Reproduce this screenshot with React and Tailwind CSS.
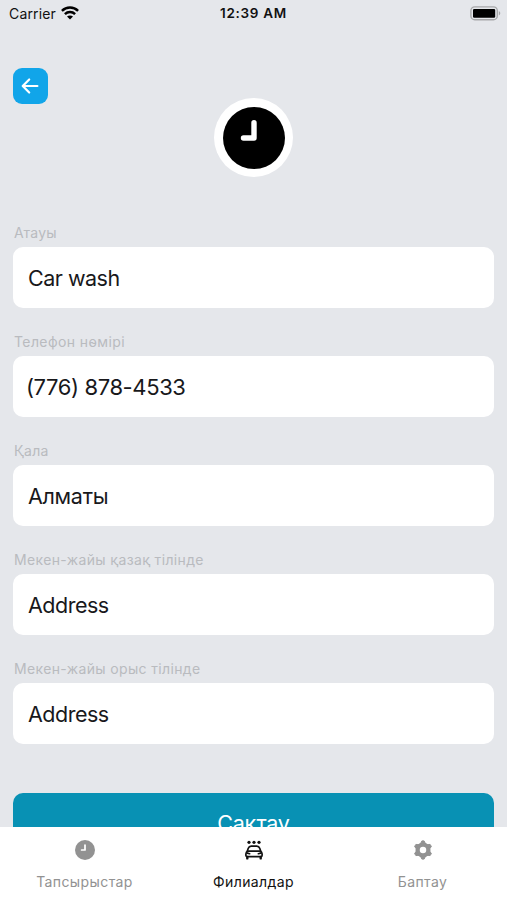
const fields = [
  { label: "Атауы", value: "Car wash", labelSize: "tracking-[0.2px]", valueSize: "pl-[15px] text-[21.5px] tracking-[-0.5px]" },
  { label: "Телефон нөмірі", value: "(776) 878-4533", labelSize: "tracking-[0.4px]", valueSize: "pl-[13px] text-[22px] tracking-[-0.4px]" },
  { label: "Қала", value: "Алматы", labelSize: "tracking-[0.2px]", valueSize: "pl-[15px] text-[21.5px] tracking-[-0.3px]" },
  { label: "Мекен-жайы қазақ тілінде", value: "Address", labelSize: "tracking-[0.35px]", valueSize: "pl-[15px] text-[21.5px] tracking-[-0.5px]" },
  { label: "Мекен-жайы орыс тілінде", value: "Address", labelSize: "tracking-[0.35px]", valueSize: "pl-[15px] text-[21.5px] tracking-[-0.5px]" },
]

const WifiIcon = () => (
  <svg className="w-[18px] h-[14px]" viewBox="0 0 18 14" fill="none" stroke="#000" strokeWidth="2.5">
    <path d="M0.9 4.9C5.5 0.5 12.5 0.5 17.1 4.9" />
    <path d="M3.9 8.1C6.8 5.3 11.2 5.3 14.1 8.1" />
    <path d="M9 13.6L6 10.6C7.7 9.1 10.3 9.1 12 10.6Z" fill="#000" stroke="none" />
  </svg>
)

const BatteryIcon = () => (
  <svg className="w-[31px] h-[15px]" viewBox="0 0 31 15" fill="none">
    <rect x="0.9" y="0.9" width="26.4" height="12.8" rx="3.8" stroke="#a7a8aa" strokeWidth="1.4" />
    <rect x="3" y="2.9" width="22.2" height="8.8" rx="1.2" fill="#000" />
    <path d="M28.8 5.1C30.8 5.9 30.8 8.7 28.8 9.5Z" fill="#a7a8aa" />
  </svg>
)

const ClockIcon = ({ className }) => (
  <svg className={className} viewBox="0 0 62 62">
    <circle cx="31" cy="31" r="31" fill="currentColor" />
    <path d="M31 15.8V31H20.5" fill="none" stroke="#fff" strokeWidth="5.4" strokeLinecap="round" strokeLinejoin="round" />
  </svg>
)

const CarWashIcon = () => (
  <svg className="w-5 h-5" viewBox="0 0 20 20" fill="none" stroke="currentColor" strokeWidth="1.7" strokeLinecap="round" strokeLinejoin="round">
    <path d="M3.2 11.2L4.3 8.2C4.8 6.8 5.8 6.1 7.2 6.1H12.8C14.2 6.1 15.2 6.8 15.7 8.2L16.8 11.2" />
    <path d="M3.9 11.1H16.1C17.4 11.6 18.1 12.6 18.1 14V15.2C18.1 16.1 17.6 16.6 16.7 16.6H3.3C2.4 16.6 1.9 16.1 1.9 15.2V14C1.9 12.6 2.6 11.6 3.9 11.1Z" />
    <path d="M3.3 17V18.4M16.7 17V18.4" strokeWidth="2.4" />
    <path d="M3.4 13.1L5.6 13.7M16.6 13.1L14.4 13.7" />
    <g fill="currentColor" stroke="none">
      <circle cx="5" cy="2.3" r="1.6" />
      <circle cx="10" cy="2.3" r="1.6" />
      <circle cx="15" cy="2.3" r="1.6" />
    </g>
  </svg>
)

const GearIcon = () => (
  <svg className="w-5 h-5" viewBox="0 0 20 20" fill="none" stroke="currentColor" strokeLinejoin="round">
    <circle cx="10" cy="10" r="5.4" strokeWidth="4.3" />
    <path d="M8.9 0.9H11.1L12.6 4H7.4ZM8.9 19.1H11.1L12.6 16H7.4ZM1.6 6.5L2.9 4.4L6.4 4.8L3.8 9.3ZM18.4 6.5L17.1 4.4L13.6 4.8L16.2 9.3ZM1.6 13.5L2.9 15.6L6.4 15.2L3.8 10.7ZM18.4 13.5L17.1 15.6L13.6 15.2L16.2 10.7Z" fill="currentColor" strokeWidth="1" />
  </svg>
)

const StatusBar = () => (
  <div className="grid grid-cols-3 items-center h-7 shrink-0 pl-[9px] pr-[6px] text-[14px] text-[#111]">
    <div className="flex items-center gap-[5px] -mt-[2px]">
      <span className="tracking-[0.15px]">Carrier</span>
      <WifiIcon />
    </div>
    <span className="-mt-[2px] -ml-[3px] text-center text-[13.5px] font-semibold tracking-[0.7px] whitespace-nowrap">12:39 AM</span>
    <div className="flex justify-end -mt-[2px]">
      <BatteryIcon />
    </div>
  </div>
)

const Field = ({ field }) => (
  <label className="block h-[109.1px]">
    <span className={`block h-[29px] leading-[29px] pl-px text-[14px] text-[#b9bbbf] ${field.labelSize}`}>{field.label}</span>
    <span className={`flex items-center h-[61px] pt-px rounded-[10px] bg-white text-[#18181b] ${field.valueSize}`}>{field.value}</span>
  </label>
)

const Tab = ({ icon, title, className }) => (
  <div className={`flex flex-1 flex-col items-center pt-[13px] ${className}`}>
    {icon}
    <span className="mt-[11px] text-[14px] leading-[22px]">{title}</span>
  </div>
)

const App = () => {
  return (
    <div className="flex flex-col h-[900px] w-full overflow-hidden bg-[#e5e7eb] font-['Inter','Liberation_Sans',sans-serif]">
      <StatusBar />
      <main className="flex-1 min-h-0 overflow-hidden px-[13px] pt-10">
        <button className="flex items-center justify-center w-[35px] h-9 rounded-[9px] bg-[#11a5e9]">
          <svg className="w-[18px] h-[18px] -ml-px" viewBox="0 0 18 18" fill="none" stroke="#fff" strokeWidth="2.2" strokeLinecap="round" strokeLinejoin="round">
            <path d="M8.2 2.5L1.7 9L8.2 15.5M1.8 9H16.4" />
          </svg>
        </button>
        <div className="flex items-center justify-center w-[79px] h-[79px] -mt-[6px] mx-auto rounded-full bg-white">
          <ClockIcon className="w-[62px] h-[62px] text-black" />
        </div>
        <form className="mt-[41px]">
          {fields.map((field) => (
            <Field key={field.label} field={field} />
          ))}
          <button type="button" className="flex items-center justify-center w-full h-[61px] pb-[2px] mt-[30px] rounded-[10px] bg-[#0891b4] text-[21.5px] tracking-[-0.2px] text-white">Сақтау</button>
        </form>
      </main>
      <nav className="flex h-[73px] shrink-0 bg-white">
        <Tab title="Тапсырыстар" icon={<ClockIcon className="w-5 h-5" />} className="text-[#929292] tracking-[0.4px]" />
        <Tab title="Филиалдар" icon={<CarWashIcon />} className="text-[#111] tracking-[0.4px]" />
        <Tab title="Баптау" icon={<GearIcon />} className="text-[#929292] tracking-[0.4px]" />
      </nav>
    </div>
  )
}

export default App
